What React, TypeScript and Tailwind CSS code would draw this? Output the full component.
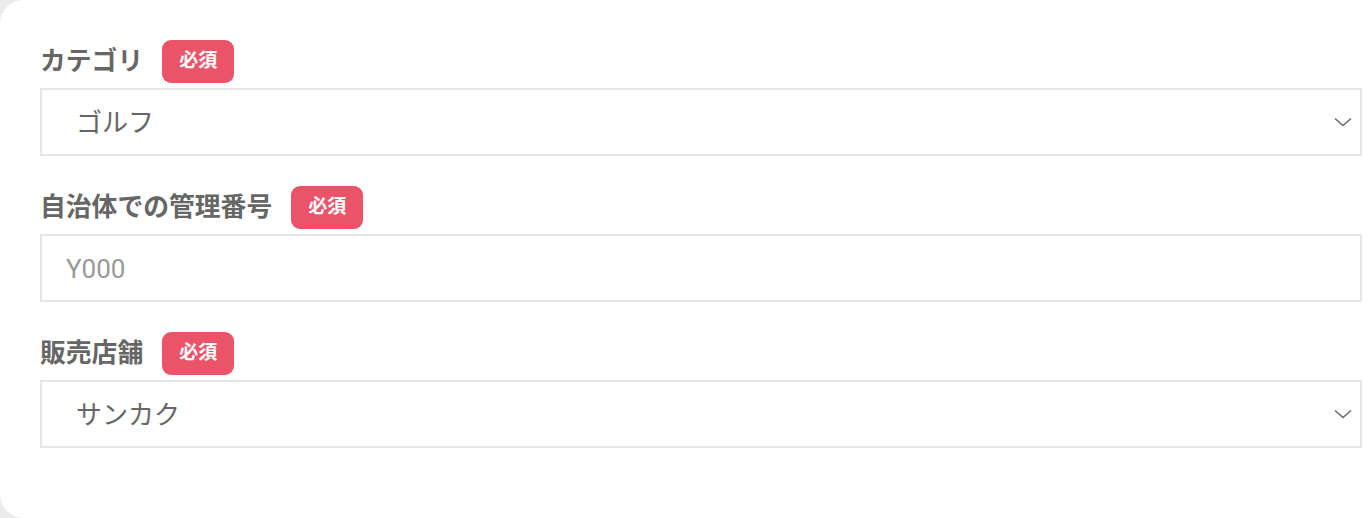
import React from "react";

const font = { fontFamily: '"Roboto", "Noto Sans CJK JP", sans-serif' };

function Badge() {
  return (
    <span className="inline-flex h-[43px] w-[72px] items-center justify-center rounded-[9px] bg-[#eb5468] text-[19px] font-bold text-white">
      必須
    </span>
  );
}

function Label({ text }: { text: string }) {
  return (
    <div className="flex items-center gap-[19px]">
      <span className="text-[25.8px] font-bold leading-none text-[#666666]">{text}</span>
      <Badge />
    </div>
  );
}

function Chevron() {
  return (
    <svg width="18" height="10" viewBox="0 0 18 10" fill="none" className="absolute right-[8px] top-1/2 -translate-y-1/2">
      <path d="M1 1.5 L9 8.5 L17 1.5" stroke="#6b6b6b" strokeWidth="1.6" />
    </svg>
  );
}

function SelectBox({ value }: { value: string }) {
  return (
    <div className="relative mt-[5px] flex h-[68px] items-center border-2 border-[#e6e6e6] bg-white pl-[34px] pt-[3px]">
      <span className="text-[26px] text-[#666666]">{value}</span>
      <Chevron />
    </div>
  );
}

function InputBox({ placeholder }: { placeholder: string }) {
  return (
    <div className="mt-[5px] flex h-[68px] items-center border-2 border-[#e6e6e6] bg-white pl-[24px] pt-[2px]">
      <span className="text-[26px] text-[#999999]">{placeholder}</span>
    </div>
  );
}

export default function App() {
  return (
    <div className="h-[518px] w-[1372px] overflow-hidden bg-[#ebebeb]" style={font}>
      <div className="flex h-full w-full flex-col gap-[30px] rounded-l-[24px] bg-white pl-[40px] pr-[10px] pt-[40px]">
        <div>
          <Label text="カテゴリ" />
          <SelectBox value="ゴルフ" />
        </div>
        <div>
          <Label text="自治体での管理番号" />
          <InputBox placeholder="Y000" />
        </div>
        <div>
          <Label text="販売店舗" />
          <SelectBox value="サンカク" />
        </div>
      </div>
    </div>
  );
}
